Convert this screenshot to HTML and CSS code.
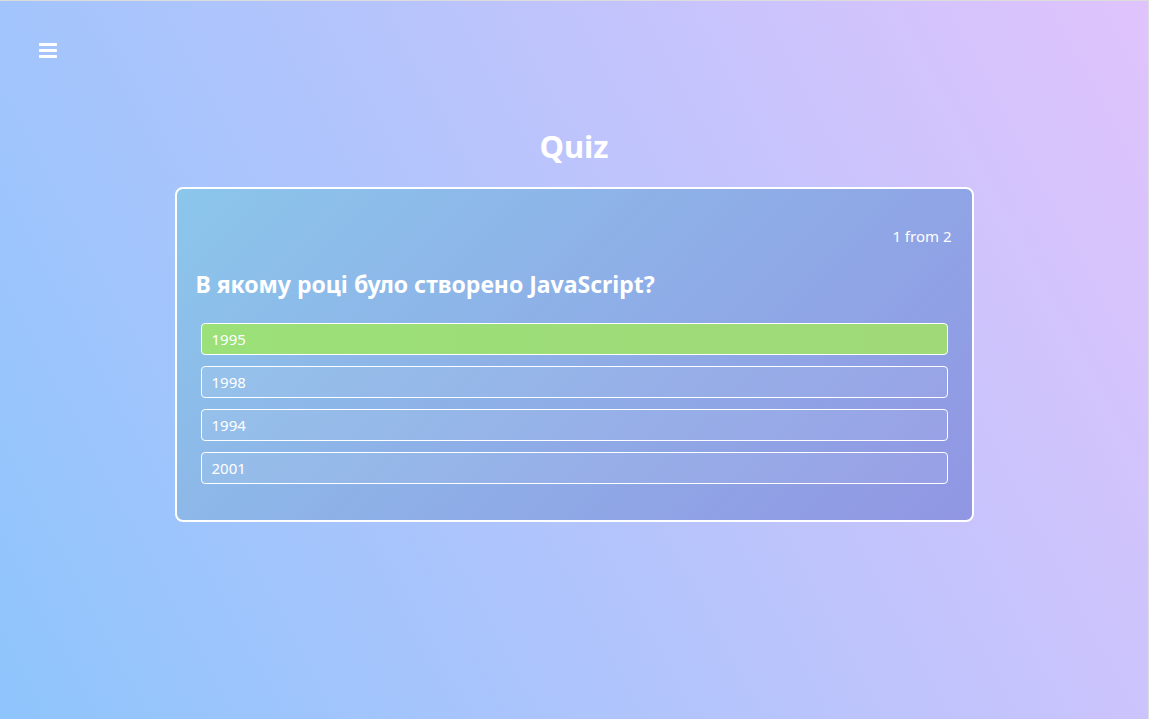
FILE: index.html
```html
<!DOCTYPE html>
<html lang="uk">
<head>
<meta charset="utf-8">
<title>Quiz</title>
<link rel="stylesheet" href="styles.css">
</head>
<body>
<div class="page">
  <header class="topbar">
    <button class="menu-btn" aria-label="Menu">
      <svg width="18" height="15" viewBox="0 0 18 15"><rect x="0" y="0" width="18" height="3" rx="0.8" fill="#fff"/><rect x="0" y="6" width="18" height="3" rx="0.8" fill="#fff"/><rect x="0" y="12" width="18" height="3" rx="0.8" fill="#fff"/></svg>
    </button>
  </header>
  <main class="main">
    <h1 class="title">Quiz</h1>
    <section class="card">
      <div class="counter">1 from 2</div>
      <h2 class="question">В якому році було створено JavaScript?</h2>
      <ul class="options">
        <li class="option correct">1995</li>
        <li class="option">1998</li>
        <li class="option">1994</li>
        <li class="option">2001</li>
      </ul>
    </section>
  </main>
</div>
</body>
</html>
```

FILE: styles.css
```css
* { box-sizing: border-box; }
html, body { margin: 0; padding: 0; height: 100%; }
body {
  font-family: "Noto Sans", "Open Sans", sans-serif;
  color: #fff;
  background-image: linear-gradient(62deg, #8ec5fc 0%, #e0c3fc 100%);
  border-top: 1px solid #dcdcdc;
  border-right: 1px solid #dcdcdc;
  overflow: hidden;
}
.page { height: 100%; }
.topbar { padding: 42px 0 0 39px; height: 100px; }
.menu-btn {
  background: none; border: 0; padding: 0; margin: 0; display: block; cursor: pointer;
}
.menu-btn svg { display: block; }
.main { display: flex; flex-direction: column; align-items: center; }
.title {
  margin: 25px 0 0;
  font-size: 31px;
  font-weight: 700;
  line-height: 40px;
}
.card {
  margin-top: 21px;
  width: 799px;
  border: 2px solid #fff;
  border-radius: 8px;
  background-image: linear-gradient(135deg, #8bc6eb 0%, #9196e3 100%);
  padding: 37px 24px 36px;
}
.counter {
  text-align: right;
  font-size: 15px;
  line-height: 20px;
  margin-right: -4px;
}
.question {
  margin: 23px 0 0 -5px;
  font-size: 23px;
  font-weight: 700;
  line-height: 30px;
}
.options {
  list-style: none;
  margin: 24px 0 0;
  padding: 0;
  display: flex;
  flex-direction: column;
  gap: 11px;
}
.option {
  height: 32px;
  border: 1px solid #fff;
  border-radius: 4px;
  padding: 0 10px;
  font-size: 15px;
  line-height: 30px;
  background: rgba(255, 255, 255, 0.08);
}
.option.correct {
  background-image: linear-gradient(90deg, #9be079, #a0d978);
}
```
